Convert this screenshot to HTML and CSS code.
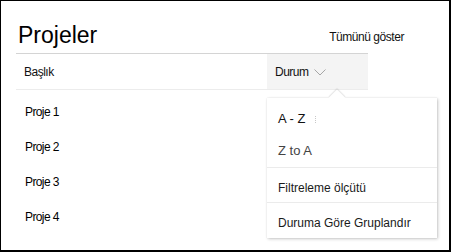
FILE: index.html
```html
<!DOCTYPE html>
<html lang="tr">
<head>
<meta charset="utf-8">
<link rel="stylesheet" href="styles.css">
</head>
<body>
<div class="frame">
  <div class="title-row">
    <h1 class="title">Projeler</h1>
    <a class="see-all">Tümünü göster</a>
  </div>
  <div class="list">
    <div class="head">
      <div class="hcell">Başlık</div>
      <div class="hcell active">Durum
        <svg class="chev" width="12" height="7" viewBox="0 0 12 7"><path d="M0.5 0.5 L6 6 L11.5 0.5" fill="none" stroke="#a6a6a6" stroke-width="1"/></svg>
      </div>
    </div>
    <div class="rows">
      <div class="row">Proje 1</div>
      <div class="row">Proje 2</div>
      <div class="row">Proje 3</div>
      <div class="row">Proje 4</div>
    </div>
  </div>
  <div class="menu">
    <div class="beak"></div>
    <div class="sec first">
      <div class="item big">A - Z<span class="caret"></span></div>
      <div class="item big muted">Z to A</div>
    </div>
    <div class="sec">
      <div class="item">Filtreleme ölçütü</div>
    </div>
    <div class="sec last">
      <div class="item">Duruma Göre Gruplandır</div>
    </div>
  </div>
</div>
</body>
</html>
```
FILE: styles.css
```css
html, body {
  margin: 0;
  padding: 0;
  background: #fff;
}
body {
  font-family: "Liberation Sans", Arial, sans-serif;
  color: #111;
}
.frame {
  position: relative;
  box-sizing: border-box;
  width: 451px;
  height: 252px;
  border-style: solid;
  border-color: #000;
  border-width: 1px 2px 2px 1px;
  padding-left: 15px;
  overflow: hidden;
}
.title-row {
  display: flex;
  align-items: flex-start;
  justify-content: space-between;
  padding-top: 20px;
  padding-right: 45px;
  height: 32px;
}
.title {
  margin: 0;
  font-weight: normal;
  font-size: 23px;
  line-height: 28px;
  color: #000;
  padding-left: 2px;
}
.see-all {
  margin-top: 9px;
  font-size: 12px;
  line-height: 14px;
  color: #111;
  letter-spacing: -0.45px;
}
.list {
  width: 352px;
}
.head {
  display: grid;
  grid-template-columns: 251px 101px;
  border-top: 1px solid #d4d4d4;
  border-bottom: 1px solid #ececec;
  height: 35px;
}
.hcell {
  display: flex;
  align-items: center;
  padding-left: 8px;
  font-size: 12px;
  letter-spacing: -0.5px;
}
.hcell.active {
  background: #f4f4f4;
}
.chev {
  margin-left: 5px;
  margin-top: 2px;
}
.rows {
  padding-top: 5px;
}
.row {
  height: 35px;
  line-height: 35px;
  padding-left: 9px;
  font-size: 12px;
  letter-spacing: -0.6px;
  color: #000;
}
.menu {
  position: absolute;
  left: 266px;
  top: 97px;
  width: 170px;
  background: #fff;
  box-shadow: 1px 1px 3px rgba(0,0,0,0.22), 0 0 1px rgba(0,0,0,0.12);
}
.beak {
  position: absolute;
  left: 64px;
  top: -6px;
  width: 12px;
  height: 12px;
  background: #fff;
  transform: rotate(45deg);
  box-shadow: -1px -1px 1px rgba(0,0,0,0.10);
}
.sec {
  position: relative;
  border-top: 1px solid #ebebeb;
  padding-top: 6px;
}
.sec.first {
  border-top: none;
  padding-top: 5px;
}
.sec.last {
  padding-bottom: 1px;
}
.item {
  padding-left: 11px;
  font-size: 12px;
  line-height: 28px;
  color: #1a1a1a;
}
.item.big {
  font-size: 13px;
  line-height: 32px;
  color: #111;
}
.item.muted {
  color: #444;
}
.caret {
  display: inline-block;
  vertical-align: middle;
  margin-left: 10px;
  height: 7px;
  border-left: 1px dotted #c8c8c8;
}
```
